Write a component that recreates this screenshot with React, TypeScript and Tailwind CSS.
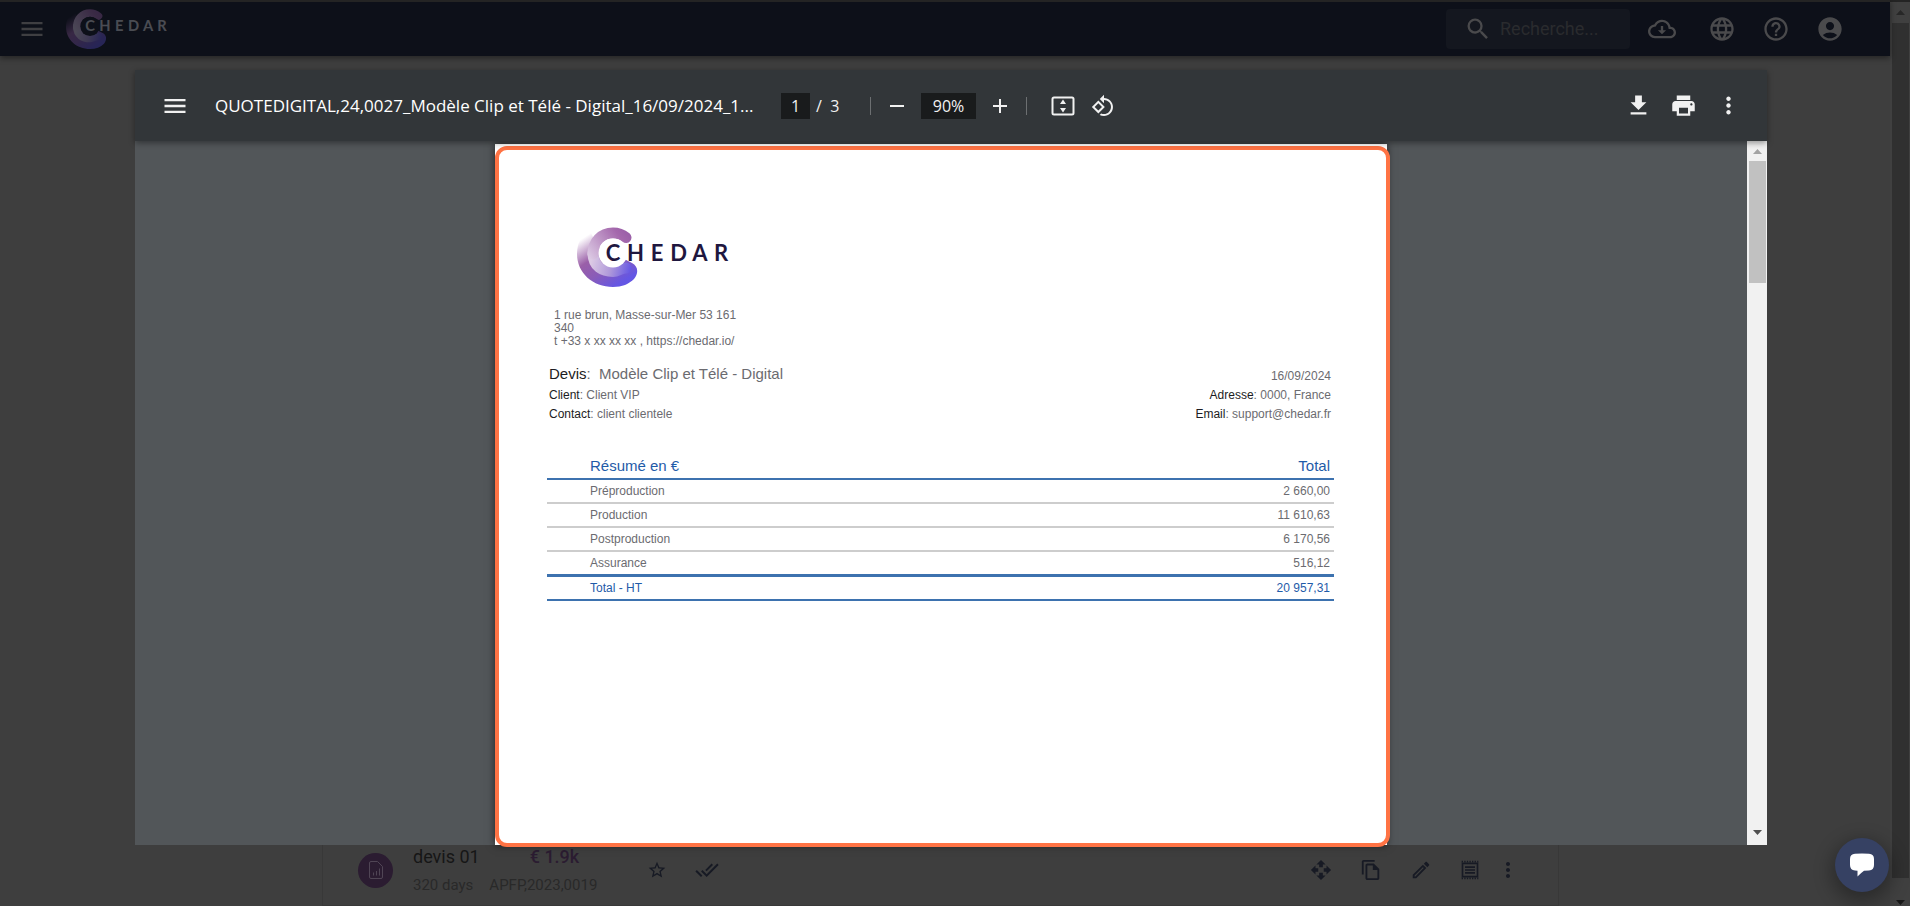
import {
  MdAccountCircle,
  MdAdd,
  MdDoneAll,
  MdGetApp,
  MdHelpOutline,
  MdLanguage,
  MdMenu,
  MdMoreVert,
  MdOpenWith,
  MdOutlineEdit,
  MdOutlineFileCopy,
  MdPrint,
  MdRemove,
  MdSearch,
  MdStarBorder,
} from "react-icons/md";

// Summary lines of the quote
const summary = [
  { label: "Préproduction", total: "2 660,00" },
  { label: "Production", total: "11 610,63" },
  { label: "Postproduction", total: "6 170,56" },
  { label: "Assurance", total: "516,12" },
];

type LogoProps = {
  id: string;
  className: string;
  textColor: string;
  holeColor: string;
};

const Logo = ({ id, className, textColor, holeColor }: LogoProps) => (
  <svg viewBox="0 0 152 60" className={className} role="img" aria-label="Chedar">
    <defs>
      <linearGradient id={`${id}-outer`} x1="10" y1="4" x2="44" y2="56" gradientUnits="userSpaceOnUse">
        <stop offset="0.06" stopColor="#9a5fa8" stopOpacity="0" />
        <stop offset="0.42" stopColor="#9a5fa8" />
        <stop offset="0.68" stopColor="#8a5cb8" />
        <stop offset="1" stopColor="#6456e4" />
      </linearGradient>
      <linearGradient id={`${id}-inner`} x1="52" y1="6" x2="14" y2="34" gradientUnits="userSpaceOnUse">
        <stop offset="0" stopColor="#9a5fa8" />
        <stop offset="0.2" stopColor="#a468ac" />
        <stop offset="1" stopColor="#dccae4" />
      </linearGradient>
      <linearGradient id={`${id}-tail`} x1="14" y1="34" x2="54" y2="44" gradientUnits="userSpaceOnUse">
        <stop offset="0" stopColor="#dccae4" />
        <stop offset="0.5" stopColor="#b09ada" />
        <stop offset="1" stopColor="#6456e4" />
      </linearGradient>
    </defs>
    <path
      d="M12 2C4 8 0 17 0 27C0 46 16 60 36 60C45 60 52 57 57 52C62 46 61 39 55 36L20 18Z"
      fill={`url(#${id}-outer)`}
    />
    <path
      d="M16 26C16 40 26 44.500 36 44.500C41 44.500 44 41 49 41"
      fill="none"
      stroke={`url(#${id}-tail)`}
      strokeWidth="11"
      strokeLinecap="round"
    />
    <path
      d="M49 10.500C44 6.500 40 6 36 6C24 6 16 15 16 27"
      fill="none"
      stroke={`url(#${id}-inner)`}
      strokeWidth="11"
      strokeLinecap="round"
    />
    <circle cx="36" cy="26" r="14.500" fill={holeColor} />
    {["C", "H", "E", "D", "A", "R"].map((letter, index) => (
      <text
        key={index}
        x={[36, 58.5, 80, 101.500, 123, 144][index]}
        y="33.500"
        textAnchor="middle"
        fontFamily="Lato, sans-serif"
        fontWeight="700"
        fontSize="22"
        fill={textColor}
      >
        {letter}
      </text>
    ))}
  </svg>
);

const CloudDownloadIcon = () => (
  <svg viewBox="0 0 24 24" className="size-7" fill="currentColor">
    <path d="M19.350 10.040C18.670 6.590 15.640 4 12 4C9.110 4 6.600 5.640 5.350 8.040C2.340 8.360 0 10.910 0 14c0 3.310 2.690 6 6 6h13c2.760 0 5-2.240 5-5 0-2.640-2.050-4.780-4.650-4.960zM19 18H6c-2.210 0-4-1.790-4-4 0-2.050 1.530-3.760 3.560-3.970l1.070-.110.5-.950C8.080 7.140 9.940 6 12 6c2.620 0 4.880 1.860 5.390 4.430l.3 1.500 1.530.110C20.780 12.140 22 13.450 22 15c0 1.650-1.350 3-3 3zM13 9.500h-2v3.500H8.500l3.500 3.500 3.500-3.500H13z" />
  </svg>
);

const FitPageIcon = () => (
  <svg viewBox="0 0 24 20" className="h-5 w-6" fill="currentColor">
    <rect x="1.500" y="1.500" width="21" height="17" rx="1.500" fill="none" stroke="currentColor" strokeWidth="2" />
    <path d="M12 3.500l3 4.500H9zM12 16.500l3-4.500H9z" />
  </svg>
);

const RotateIcon = () => (
  <svg viewBox="0 0 24 24" className="size-6" fill="currentColor">
    <path d="M7.340 6.410L.860 12.900l6.490 6.480 6.490-6.480-6.500-6.490zM3.690 12.900l3.660-3.660L11 12.900l-3.660 3.660-3.650-3.660zm15.670-6.260C17.610 4.880 15.300 4 13 4V.760L8.760 5 13 9.240V6c1.790 0 3.580.680 4.950 2.050 2.730 2.730 2.730 7.170 0 9.900C16.580 19.320 14.790 20 13 20c-.970 0-1.940-.210-2.840-.610l-1.490 1.490C10.020 21.620 11.510 22 13 22c2.300 0 4.610-.880 6.360-2.640 3.520-3.510 3.520-9.210 0-12.720z" />
  </svg>
);

const ReceiptIcon = () => (
  <svg viewBox="0 0 24 24" className="size-5" fill="none" stroke="currentColor">
    <path d="M3 4h18v16H3z" strokeWidth="2" />
    <path d="M6 8.500h12M6 12h12M6 15.500h12" strokeWidth="2" />
    <path d="M2 2h20M2 22h20" strokeWidth="2" strokeDasharray="1.600 1.500" />
  </svg>
);

const FileChartIcon = () => (
  <svg viewBox="0 0 16 20" className="h-5 w-4" fill="none" stroke="currentColor">
    <path d="M3 1.500h6.500L14.500 6.500V17a1.500 1.500 0 0 1-1.500 1.500H3A1.500 1.500 0 0 1 1.500 17V3A1.500 1.500 0 0 1 3 1.500z" />
    <path d="M5.500 15.500v-3M8.500 15.500V11M11.500 15.500V8.500" />
  </svg>
);

const Arrow = ({ className }: { className: string }) => (
  <svg viewBox="0 0 9 5" className={className} fill="currentColor">
    <path d="M0 5L4.500 0L9 5z" />
  </svg>
);

const Header = () => (
  <header className="z-10 flex h-14 shrink-0 items-center border-t-2 border-[#242424] bg-[#0d1019] pr-[46px] pl-4 text-[#4a4a4c] shadow-[0_2px_6px_rgba(0,0,0,0.45)]">
    <button aria-label="Menu" className="p-0.5">
      <MdMenu className="size-7 text-[#3f3f42]" />
    </button>
    <div className="ml-4.5 flex-1">
      <Logo id="nav" className="h-10 opacity-30" textColor="#d8d8d8" holeColor="#0d1019" />
    </div>
    <label className="flex h-10 w-46 items-center gap-2 rounded bg-[#14171f] pl-4.5">
      <MdSearch className="size-7 shrink-0" />
      <input
        type="search"
        aria-label="Recherche"
        placeholder="Recherche..."
        className="w-full min-w-0 bg-transparent text-lg outline-none placeholder:text-[#2a2b2e]"
      />
    </label>
    <button aria-label="Télécharger" className="ml-4.5">
      <CloudDownloadIcon />
    </button>
    <div className="ml-8 flex gap-6.5">
      <button aria-label="Langue">
        <MdLanguage className="size-7" />
      </button>
      <button aria-label="Aide">
        <MdHelpOutline className="size-7" />
      </button>
      <button aria-label="Compte">
        <MdAccountCircle className="size-7" />
      </button>
    </div>
  </header>
);

const QuoteRow = () => (
  <div className="mr-[331px] ml-[322px] flex h-[71px] items-center border-x border-b border-[#383838] pl-[35px] text-[#171a24]">
    <div className="flex size-[35px] items-center justify-center rounded-full bg-[#2b1c31] text-[#504555]">
      <FileChartIcon />
    </div>
    <div className="ml-5 grid w-[234px] grid-cols-[auto_1fr] pt-0.5 text-[#292929]">
      <span className="text-lg leading-7 text-[#161616]">devis 01</span>
      <span className="pl-[50px] text-lg leading-7 font-medium text-[#2b1c31]">€ 1.9k</span>
      <span className="col-span-2 flex gap-4 text-[15px] leading-7">
        <span>320 days</span>
        <span>APFP,2023,0019</span>
      </span>
    </div>
    <button aria-label="Favori">
      <MdStarBorder className="size-5" />
    </button>
    <button aria-label="Valider" className="ml-7">
      <MdDoneAll className="size-6" />
    </button>
    <div className="ml-auto flex items-center gap-7 pr-[38px]">
      <button aria-label="Déplacer">
        <MdOpenWith className="size-5.5" />
      </button>
      <button aria-label="Dupliquer">
        <MdOutlineFileCopy className="size-5.5" />
      </button>
      <button aria-label="Modifier">
        <MdOutlineEdit className="size-5.5" />
      </button>
      <button aria-label="Détails">
        <ReceiptIcon />
      </button>
      <button aria-label="Plus" className="-ml-3">
        <MdMoreVert className="size-6" />
      </button>
    </div>
  </div>
);

const Toolbar = () => (
  <div className="z-10 flex h-[71px] shrink-0 items-center bg-[#323639] pr-[25px] pl-6.5 font-['Open_Sans'] text-base text-[#f1f1f1] shadow-[0_2px_6px_rgba(0,0,0,0.4)]">
    <button aria-label="Panneau latéral">
      <MdMenu className="size-7" />
    </button>
    <h1 className="ml-6.5 w-[542px] text-[17px] font-medium whitespace-nowrap text-white">
      QUOTEDIGITAL,24,0027_Modèle Clip et Télé - Digital_16/09/2024_1...
    </h1>
    <input
      aria-label="Page"
      defaultValue="1"
      className="ml-6 h-[26px] w-[29px] bg-[#191b1c] text-center outline-none"
    />
    <span className="ml-1.5 w-[54px]">/&nbsp; 3</span>
    <span className="h-4.5 w-px bg-[#6c6f71]" />
    <button aria-label="Zoom arrière" className="ml-3.5">
      <MdRemove className="size-6" />
    </button>
    <input
      aria-label="Zoom"
      defaultValue="90%"
      className="mx-3 h-[26px] w-[55px] bg-[#191b1c] text-center outline-none"
    />
    <button aria-label="Zoom avant">
      <MdAdd className="size-6" />
    </button>
    <span className="ml-3.5 h-4.5 w-px bg-[#6c6f71]" />
    <button aria-label="Ajuster à la page" className="ml-6">
      <FitPageIcon />
    </button>
    <button aria-label="Pivoter" className="ml-4">
      <RotateIcon />
    </button>
    <div className="ml-auto flex gap-4.5">
      <button aria-label="Télécharger le document">
        <MdGetApp className="size-[27px]" />
      </button>
      <button aria-label="Imprimer">
        <MdPrint className="size-[27px]" />
      </button>
      <button aria-label="Plus d'actions">
        <MdMoreVert className="size-[27px]" />
      </button>
    </div>
  </div>
);

const QuoteDocument = () => (
  <article className="relative mx-auto mt-[3px] w-[892px] bg-white pt-[83px] pr-[53px] pl-[52px] font-['Liberation_Sans'] text-xs text-[#6b6b70] shadow-[0_0_8px_rgba(0,0,0,0.6)]">
    <Logo id="doc" className="ml-[30px] h-15" textColor="#1f173f" holeColor="#ffffff" />

    {/* Company address */}
    <address className="mt-5.5 ml-[7px] w-50 leading-[13px] not-italic">
      1 rue brun, Masse-sur-Mer 53 161
      <br />
      340
      <br />t +33 x xx xx xx , https://chedar.io/
    </address>

    {/* Quote and client details */}
    <div className="mt-4 mr-[3px] ml-[2px] flex justify-between leading-[19px]">
      <div>
        <h2 className="mb-0.5 text-[15px] leading-5">
          <span className="text-[#1c1c22]">Devis</span>:&nbsp; Modèle Clip et Télé - Digital
        </h2>
        <p>
          <span className="text-[#1c1c22]">Client</span>: Client VIP
        </p>
        <p>
          <span className="text-[#1c1c22]">Contact</span>: client clientele
        </p>
      </div>
      <div className="pt-[3px] text-right">
        <p>16/09/2024</p>
        <p>
          <span className="text-[#1c1c22]">Adresse</span>: 0000, France
        </p>
        <p>
          <span className="text-[#1c1c22]">Email</span>: support@chedar.fr
        </p>
      </div>
    </div>

    <table className="mt-7.5 w-full border-collapse">
      <thead>
        <tr className="h-[25px] border-b-2 border-[#3d72af] text-[15px] text-[#1f5ba8]">
          <th className="pl-[43px] text-left font-normal">Résumé en €</th>
          <th className="pr-1 text-right font-normal">Total</th>
        </tr>
      </thead>
      <tbody>
        {summary.map((line) => (
          <tr key={line.label} className="h-6 border-b-2 border-[#cdcdcd]">
            <td className="pl-[43px]">{line.label}</td>
            <td className="pr-1 text-right">{line.total}</td>
          </tr>
        ))}
      </tbody>
      <tfoot>
        <tr className="h-[25px] border-t-3 border-b-2 border-[#3d72af] text-[#1f5ba8]">
          <td className="pl-[43px]">Total - HT</td>
          <td className="pr-1 text-right">20 957,31</td>
        </tr>
      </tfoot>
    </table>

    {/* Highlight frame */}
    <div className="pointer-events-none absolute top-0.5 -right-[3px] -bottom-0.5 left-0 rounded-xl border-4 border-[#ff7344]" />
  </article>
);

const PdfViewer = () => (
  <section className="absolute top-[70px] right-[143px] bottom-[61px] left-[135px] flex flex-col">
    <Toolbar />
    <div className="flex min-h-0 flex-1 bg-[#525659]">
      <div className="flex min-w-0 flex-1">
        <QuoteDocument />
      </div>
      <div className="flex w-5 flex-col items-center bg-[#f1f1f1]">
        <Arrow className="mt-2 h-[5px] w-[9px] text-[#a3a3a3]" />
        <div className="mt-[7px] h-[122px] w-[17px] bg-[#c1c1c1]" />
        <Arrow className="mt-auto mb-2.5 h-[5px] w-[9px] rotate-180 text-[#505050]" />
      </div>
    </div>
  </section>
);

const App = () => {
  return (
    <main className="relative flex h-screen overflow-hidden bg-[#3e3e3e] font-[Roboto]">
      <div className="flex min-w-0 flex-1 flex-col justify-between">
        <Header />
        <QuoteRow />
      </div>

      {/* Page scrollbar */}
      <div className="flex w-5 flex-col items-center border-t-2 border-[#242424] bg-[#404040]">
        <Arrow className="mt-2 h-[5px] w-[9px] text-[#272727]" />
        <div className="mt-2 w-[17px] flex-1 bg-[#303030]" />
        <Arrow className="mt-5.5 mb-px h-[5px] w-[9px] rotate-180 text-[#171717]" />
      </div>

      <PdfViewer />

      <button
        aria-label="Ouvrir le chat"
        className="absolute right-[21px] bottom-3.5 flex size-[54px] items-center justify-center rounded-full bg-[#364163] text-white shadow-[0_6px_18px_4px_rgba(0,0,0,0.3)]"
      >
        <svg viewBox="0 0 26 24" className="h-6 w-[26px]" fill="currentColor">
          <path d="M6 .800Q13 .200 20 .800Q25 1 25 6V12Q25 17 20 17.500L15 17.800Q12 20 8.500 23.500V17.800L6 17.500Q1 17 1 12V6Q1 1 6 .800z" />
        </svg>
      </button>
    </main>
  );
};

export default App;
